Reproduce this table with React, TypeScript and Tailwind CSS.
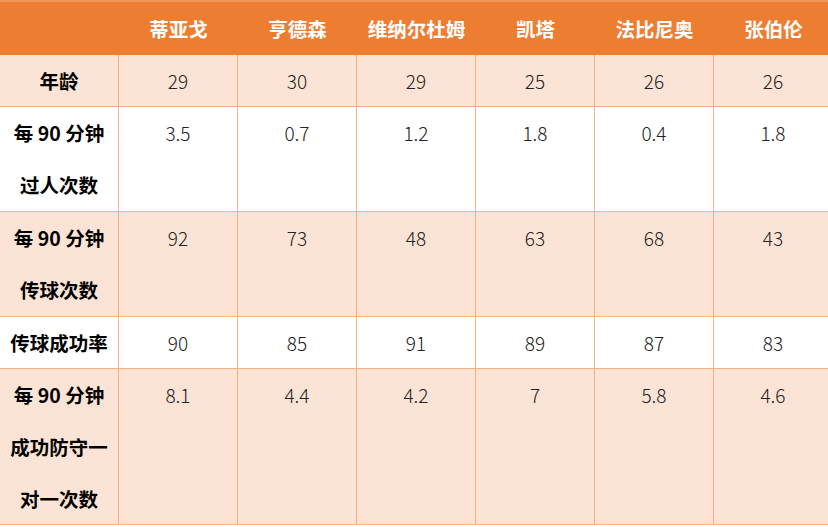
import React from "react";

const players = ["蒂亚戈", "亨德森", "维纳尔杜姆", "凯塔", "法比尼奥", "张伯伦"];

type Row = { label: string[]; values: string[]; h: string; bg: string };

const rows: Row[] = [
  { label: ["年龄"], values: ["29", "30", "29", "25", "26", "26"], h: "h-[52px]", bg: "bg-[#FBE4D5]" },
  { label: ["每 90 分钟", "过人次数"], values: ["3.5", "0.7", "1.2", "1.8", "0.4", "1.8"], h: "h-[105px]", bg: "bg-white" },
  { label: ["每 90 分钟", "传球次数"], values: ["92", "73", "48", "63", "68", "43"], h: "h-[105px]", bg: "bg-[#FBE4D5]" },
  { label: ["传球成功率"], values: ["90", "85", "91", "89", "87", "83"], h: "h-[52px]", bg: "bg-white" },
  { label: ["每 90 分钟", "成功防守一", "对一次数"], values: ["8.1", "4.4", "4.2", "7", "5.8", "4.6"], h: "h-[156px]", bg: "bg-[#FBE4D5]" },
];

export default function App() {
  return (
    <div
      className="w-[828px] h-[527px] overflow-hidden bg-white"
      style={{ fontFamily: '"Noto Sans CJK SC", "Noto Sans", sans-serif' }}
    >
      <div className="w-[833px]">
        <div className="h-[55px] border-t-2 border-[#F19658] bg-[#ED7D31] grid grid-cols-[repeat(7,119px)]">
          <div />
          {players.map((p) => (
            <div key={p} className="text-white font-bold text-[19.5px] leading-[53px] text-center">
              {p}
            </div>
          ))}
        </div>
        {rows.map((r, i) => (
          <div
            key={i}
            className={`${r.h} ${r.bg} border-b border-[#F4B183] grid grid-cols-[repeat(7,119px)] overflow-hidden`}
          >
            <div className="border-r border-[#F4B183] flex flex-col items-center">
              {r.label.map((l, j) => (
                <div key={j} className="leading-[52px] text-[19.5px] font-bold text-black whitespace-nowrap">
                  {l}
                </div>
              ))}
            </div>
            {r.values.map((v, j) => (
              <div
                key={j}
                className="border-r border-[#F4B183] text-center leading-[52px] text-[19px] font-light text-[#222]"
              >
                {v}
              </div>
            ))}
          </div>
        ))}
      </div>
    </div>
  );
}
